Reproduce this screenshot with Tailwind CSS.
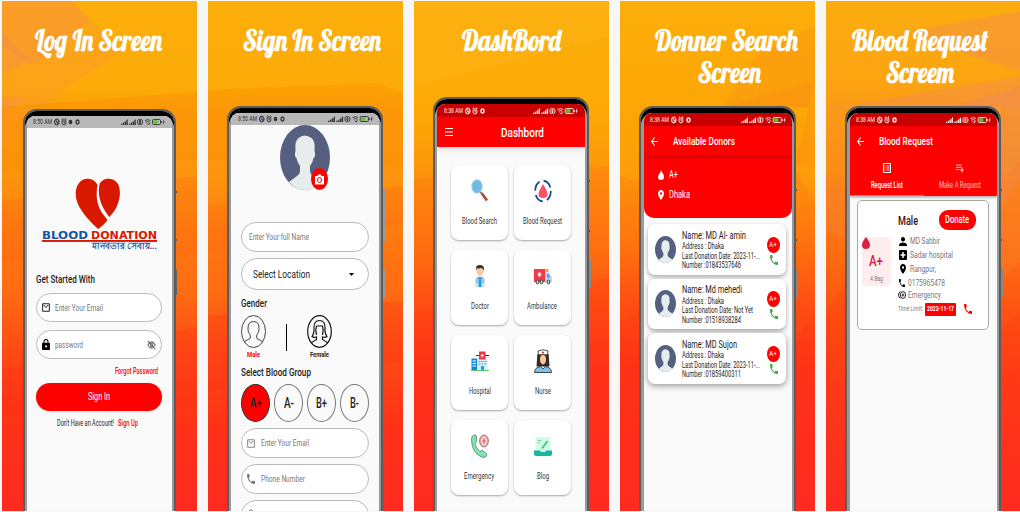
<!DOCTYPE html>
<html lang="en">
<head>
<meta charset="utf-8">
<title>Blood Donation App Screens</title>
<script src="https://cdn.jsdelivr.net/npm/@tailwindcss/browser@4"></script>
</head>
<body class="w-[1020px] h-[512px] overflow-hidden bg-[#f7f7f7] font-['Roboto','Noto_Sans',sans-serif] leading-none text-[#222]">
<svg class="hidden">
  <symbol id="sys" viewBox="0 0 26 10" preserveAspectRatio="none"><g fill="none" stroke="currentColor" stroke-width="1"><ellipse cx="2.8" cy="5" rx="2.3" ry="3"/><path d="M1 3.4l3.6 3M2.8 2v3.2L1.2 7M4.6 4.2L3 7.6" stroke-width=".7"/><ellipse cx="10" cy="5.3" rx="2" ry="2.6"/><path d="M7.6 2.6L9 1.6M12.4 2.6L11 1.6M10 3.8v1.7l1 .6"/></g></symbol>
  <symbol id="sysr" viewBox="0 0 44 10" preserveAspectRatio="none"><path fill="currentColor" d="M0 8V7l1.4-.7V8zM2 8V6l1.2-.8V8zM3.700 8V4.800L5 4v4zM5.400 8V3.400L6.800 2v6zM8 8V7l1.400-.7V8zM10 8V6l1.200-.8V8zM11.700 8V4.800L13 4v4zM13.400 8V3.400L14.800 2v6z"/><g fill="none" stroke="currentColor" stroke-width=".9"><ellipse cx="18" cy="5" rx="1.500" ry="2.600"/><ellipse cx="20" cy="5" rx="1.500" ry="2.600"/><path d="M24 3.600q2.700-2 5.400 0M25 5.200q1.700-1.200 3.300 0M26 6.500l1.500 1.500 1.600-2.500"/><rect x="31.500" y="2.500" width="8" height="5" rx="1"/></g><rect x="32.500" y="3.200" width="4" height="3.600" fill="#55c92e"/><path d="M40 4h.8v2H40zM43.200 2l-1.600 3.400h.9L42 8l1.800-3.400h-.9z" fill="currentColor"/></symbol>
  <symbol id="mail" viewBox="0 0 24 24" preserveAspectRatio="none"><path fill="none" stroke="currentColor" stroke-width="2.500" d="M2 2h20v20H2zM5 5l7 7 7-7"/></symbol>
  <symbol id="phone" viewBox="3 3 18 18" preserveAspectRatio="none"><path fill="currentColor" d="M6.620 10.790c1.440 2.830 3.760 5.140 6.590 6.590l2.200-2.200c.27-.27.67-.36 1.020-.24 1.120.37 2.330.57 3.570.57.55 0 1 .45 1 1V20c0 .55-.45 1-1 1-9.390 0-17-7.610-17-17 0-.55.450-1 1-1h3.500c.55 0 1 .45 1 1 0 1.250.2 2.450.57 3.570.11.35.03.74-.25 1.020z"/></symbol>
  <symbol id="pin" viewBox="5 2 14 20" preserveAspectRatio="none"><path fill="currentColor" fill-rule="evenodd" d="M12 2C8.130 2 5 5.130 5 9c0 5.250 7 13 7 13s7-7.750 7-13c0-3.870-3.130-7-7-7zm0 9.500a2.500 2.500 0 010-5 2.500 2.500 0 010 5z"/></symbol>
  <symbol id="back" viewBox="4 4 16 16" preserveAspectRatio="none"><path fill="currentColor" d="M20 11H7.830l5.590-5.590L12 4l-8 8 8 8 1.410-1.410L7.830 13H20z"/></symbol>
  <symbol id="avatar" viewBox="0 0 50 65" preserveAspectRatio="none"><ellipse cx="25" cy="32.500" rx="25" ry="32.500" fill="#556080"/><path fill="#e7eced" d="M9 57l8-6q3-2 3-5v-5q-3-4-3.500-8-2-1-1.500-5l.5-2q-1-10 3-13 6-5 13 0 4 3 3 13l.5 2q.5 4-1.500 5-.5 4-3.500 8v5q0 3 3 5l9 6q-7 8-16.500 8T9 57z"/></symbol>
</svg>

<main class="flex gap-[11px] pl-[2px] pt-px h-[511px]">

<!-- Log in -->
<section class="relative w-[195px] h-[510px] shrink-0 overflow-hidden flex flex-col bg-[linear-gradient(#fcae0a_0%,#fcab08_17%,#fd9d0c_22%,#fd930f_35%,#fe7a10_46%,#fe6c12_57%,#fe4c15_68%,#fe3218_83%,#ff2a20_100%)]">
  <svg class="absolute inset-0" width="195" height="510"><path fill="#f58c50" opacity=".35" d="M0 0h70l18 18L55 50 30 65 0 45z"/><path fill="#f99830" opacity=".4" d="M70 0l50 50-60 40L0 150V0z"/><path fill="#f08a60" opacity=".3" d="M0 30l30 30L0 72zM0 96h22L0 115z"/><path fill="#fd8800" opacity=".3" d="M0 106l195-15v67L0 170z"/><path fill="#ff5a10" opacity=".2" d="M0 200l195-25v80L0 260z"/><path fill="#ff2010" opacity=".18" d="M0 368l195-42v80L0 415z"/></svg>
  <header class="relative h-[108px] shrink-0 pt-[23px]"><h1 class="h-8 flex items-center pl-[33px] font-['Lobster','Liberation_Serif',serif] text-[30px] text-white [-webkit-text-stroke:0.6px_white]"><span data-w="127">Log In Screen</span></h1></header>
  <div class="relative ml-[21px] w-[153px] flex-1 rounded-t-[14px] bg-[#999] border-x-2 border-t-2 border-[#5c5c5c] shadow-[inset_0_5px_0_#000]">
    <i class="absolute -right-[3px] top-[80px] h-[50px] w-px border-y-2 border-[#555]"></i><i class="absolute -right-[3px] top-[158px] h-[26px] w-px bg-[#666]"></i>
    <div class="mx-[2px] mt-[5px] h-full rounded-t-[8px] overflow-hidden bg-[#fafafa]">
      <div class="h-3 bg-[#b8b8b8] flex items-center pl-[6px] pr-[7px] text-[#333] text-[8px]"><span data-w="19">8:50 AM</span><svg class="ml-[2px] w-[26px] h-2.5"><use href="#sys"/><ellipse cx="16.500" cy="5" rx="1.800" ry="2.300" fill="currentColor"/><ellipse cx="23.500" cy="5" rx="1.500" ry="2" fill="none" stroke="currentColor" stroke-width="1.300"/></svg><svg class="ml-auto w-11 h-2.5"><use href="#sysr"/></svg></div>
      <div class="mt-[50px] flex flex-col items-center">
        <svg class="w-[46px] h-[52px] mr-[4px]" viewBox="0 0 46 52"><path fill="#d91800" d="M22.500 7C19-1 8-1 4 5-1 11 0 22 5 30c6 10 14 17 18 21 3-2 7-5 9.500-9C23 31 20 22 22.500 7zM24.500 6.500C27-1 39-1 43 6c4 8 1 19-3 26l-5.500 7C27 30 22 19 24.500 6.500z"/></svg>
        <div class="h-[10px] w-[115px] flex items-center justify-between font-['DejaVu_Sans'] font-bold text-[10.500px]"><span data-w="46" class="text-[#1355a8]">BLOOD</span><span data-w="66" class="text-[#d91800]">DONATION</span></div>
        <div class="w-[115px] h-[2px] bg-[#d91800] border-b border-[#7b4a70]"></div>
        <div class="h-[9px] w-[115px] flex items-center justify-end text-[8.500px] font-bold text-[#1355a8]"><span data-w="65">মানবতার সেবায়...</span></div>
      </div>
      <div class="ml-[9px] w-[126px]">
        <h2 class="mt-[22px] h-3 flex items-center font-medium text-[11px]"><span data-w="59">Get Started With</span></h2>
        <div class="mt-2 h-[29px] rounded-full border border-[#bbb] bg-white flex items-center pl-[5px] text-[9.500px] text-[#777]"><svg class="w-2 h-[9px] text-black mr-[5px]"><use href="#mail"/></svg><span data-w="48">Enter Your Email</span></div>
        <div class="mt-2 h-[29px] rounded-full border border-[#bbb] bg-white flex items-center pl-[5px] pr-[5px] text-[9.500px] text-[#777]"><svg class="w-2 h-[11px] text-black mr-[5px]" viewBox="4 1 16 21" preserveAspectRatio="none"><path fill-rule="evenodd" d="M18 8h-1V6A5 5 0 007 6v2H6a2 2 0 00-2 2v10c0 1.100.9 2 2 2h12a2 2 0 002-2V10a2 2 0 00-2-2zm-6 9a2 2 0 110-4 2 2 0 010 4zM9 8V6a3 3 0 016 0v2z"/></svg><span data-w="28">password</span><svg class="ml-auto w-[9px] h-[10px]" viewBox="0 0 24 24" preserveAspectRatio="none" fill="none" stroke="#666" stroke-width="2.500"><path d="M2 12q10-15 20 0-10 15-20 0zM2 2l20 20"/><circle cx="12" cy="12" r="3.500"/></svg></div>
        <div class="mt-[7px] h-[10px] flex items-center justify-end pr-[4px] text-[8.500px] font-medium text-[#f00]"><span data-w="43">Forgot Password</span></div>
        <button class="mt-[7px] h-[28px] w-full rounded-full bg-[#f00] text-white text-[10.500px] flex items-center justify-center shadow"><span data-w="22">Sign In</span></button>
        <p class="mt-[7px] h-[10px] flex items-center pl-[21px] gap-[4px] text-[8.500px]"><span data-w="57">Don't Have an Account!</span><span data-w="20" class="font-medium text-[#f00]">Sign Up</span></p>
      </div>
    </div>
  </div>
</section>

<!-- Sign up -->
<section class="relative w-[195px] h-[510px] shrink-0 overflow-hidden flex flex-col bg-[linear-gradient(#fcae0a_0%,#fcab08_17%,#fd9d0c_22%,#fd930f_35%,#fe7a10_46%,#fe6c12_57%,#fe4c15_68%,#fe3218_83%,#ff2a20_100%)]">
  <svg class="absolute inset-0" width="195" height="510"><path fill="#fd8800" opacity=".3" d="M0 89l170-7 25 10v75L0 158z"/><path fill="#ff5a10" opacity=".2" d="M0 205l195-20v38L0 250z"/><path fill="#ff2010" opacity=".18" d="M0 315l195-15v60L0 390z"/></svg>
  <header class="relative h-[105px] shrink-0 pt-[23px]"><h1 class="h-8 flex items-center pl-[35px] font-['Lobster','Liberation_Serif',serif] text-[30px] text-white [-webkit-text-stroke:0.6px_white]"><span data-w="138">Sign In Screen</span></h1></header>
  <div class="relative ml-[19px] w-[156px] flex-1 rounded-t-[14px] bg-[#999] border-x-2 border-t-2 border-[#5c5c5c] shadow-[inset_0_5px_0_#000]">
    <i class="absolute -right-[4px] top-[81px] h-[52px] w-[2px] bg-[#999]"></i><i class="absolute -right-[4px] top-[162px] h-[28px] w-[2px] bg-[#999]"></i>
    <div class="mx-[2px] mt-[5px] h-full rounded-t-[8px] overflow-hidden bg-[#fafafa]">
      <div class="h-3 bg-[#b8b8b8] flex items-center pl-[7px] pr-[6px] text-[#333] text-[8px]"><span data-w="19">8:50 AM</span><svg class="ml-[2px] w-[26px] h-2.5"><use href="#sys"/><ellipse cx="16.500" cy="5" rx="1.800" ry="2.300" fill="currentColor"/><ellipse cx="23.500" cy="5" rx="1.500" ry="2" fill="none" stroke="currentColor" stroke-width="1.300"/></svg><svg class="ml-auto w-[45px] h-2.5"><use href="#sysr"/></svg></div>
      <div class="relative ml-[49px] w-[50px] h-[65px]"><svg class="w-[50px] h-[65px]"><use href="#avatar"/></svg>
        <div class="absolute left-[31px] top-[43px] w-[17px] h-[22px] rounded-[50%] bg-[#f00] flex items-center justify-center"><svg class="w-[9px] h-[11px]" viewBox="0 0 9 11"><path fill="#fff" d="M0 2h2.500l.8-1.500h2.400L6.500 2H9v8.500H0z"/><ellipse cx="4.500" cy="6" rx="2" ry="2.500" fill="none" stroke="#f00"/></svg></div></div>
      <div class="ml-[10px] w-[128px]">
        <div class="mt-[32px] h-[30px] rounded-full border border-[#bbb] bg-white flex items-center pl-[7px] text-[9.500px] text-[#777]"><span data-w="60">Enter Your full Name</span></div>
        <div class="mt-[6px] h-[32px] rounded-full border border-[#bbb] bg-white flex items-center pl-[11px] pr-[14px] text-[11px]"><span data-w="57">Select Location</span><svg class="ml-auto w-[5px] h-[3px]" viewBox="0 0 5 3"><path d="M0 0h5L2.500 3z"/></svg></div>
        <h2 class="mt-[7px] h-3 flex items-center font-medium text-[11px]"><span data-w="26">Gender</span></h2>
        <div class="mt-[6px] flex">
          <div class="w-[25px] flex flex-col items-center"><svg class="w-[25px] h-[33px]" viewBox="0 0 25 33" fill="none" stroke="#444"><ellipse cx="12.500" cy="16.500" rx="12" ry="16"/><path d="M3 27q3-2 6-3.500.8-1 0-4-2-2-2-5-.5-8 5.500-8t5.500 8q0 3-2 5-.8 3 0 4 3 1.500 6 3.500"/></svg><div class="h-[14px] flex items-center text-[8px] font-bold text-[#f00]"><span data-w="13">Male</span></div></div>
          <div class="ml-[20px] mt-[9px] w-px h-[27px] bg-black"></div>
          <div class="ml-[20px] w-[25px] flex flex-col items-center"><svg class="w-[25px] h-[33px]" viewBox="0 0 25 33" fill="none" stroke="#111" stroke-width="1.200"><ellipse cx="12.500" cy="16.500" rx="11.800" ry="15.800"/><path d="M4 28q3-2 5.500-3.500V22q-2.500 1-4.500-.5 2.500-3.500 2-9 0-7 5.500-7t5.500 7q-.5 5.500 2 9-2 1.500-4.500.5v2.500q2.500 1.500 5.500 3.500M9.500 20q-1.500-5 0-9h6q1.500 4 0 9"/></svg><div class="h-[14px] flex items-center text-[8px] font-bold"><span data-w="19">Female</span></div></div>
        </div>
        <h2 class="mt-[4px] h-3 flex items-center font-medium text-[11px]"><span data-w="70">Select Blood Group</span></h2>
        <div class="mt-[6px] flex gap-[4px] text-[14px] font-medium">
          <div class="w-[29px] h-[38px] rounded-[50%] border border-[#333] bg-[#f00] flex items-center justify-center"><span data-w="12">A+</span></div>
          <div class="w-[29px] h-[38px] rounded-[50%] border border-[#777] flex items-center justify-center"><span data-w="10">A-</span></div>
          <div class="w-[29px] h-[38px] rounded-[50%] border border-[#777] flex items-center justify-center"><span data-w="11">B+</span></div>
          <div class="w-[29px] h-[38px] rounded-[50%] border border-[#777] flex items-center justify-center"><span data-w="9">B-</span></div>
        </div>
        <div class="mt-[6px] h-[30px] rounded-full border border-[#bbb] bg-white flex items-center pl-[5px] text-[9.500px] text-[#777]"><svg class="w-2 h-[9px] mr-[6px]"><use href="#mail"/></svg><span data-w="48">Enter Your Email</span></div>
        <div class="mt-[6px] h-[30px] rounded-full border border-[#bbb] bg-white flex items-center pl-[5px] text-[9.500px] text-[#777]"><svg class="w-2 h-[10px] mr-[6px]"><use href="#phone"/></svg><span data-w="44">Phone Number</span></div>
        <div class="mt-[6px] h-[30px] rounded-full border border-[#bbb] bg-white pl-[6px] pt-[8px]"><svg class="w-[6px] h-[9px]" viewBox="0 0 6 9" fill="none" stroke="#777"><path d="M1 4V2q2-3 4 0v2"/></svg></div>
      </div>
    </div>
  </div>
</section>

<!-- Dashboard -->
<section class="relative w-[195px] h-[510px] shrink-0 overflow-hidden flex flex-col bg-[linear-gradient(#fcae0a_0%,#fcaa06_20%,#fda008_28%,#fd930c_34%,#fe7a10_44%,#fe6c10_50%,#fe5212_58%,#fe3218_72%,#ff2a20_100%)]">
  <svg class="absolute inset-0" width="195" height="510"><path fill="#fdb820" opacity=".3" d="M0 85L195 35V0H0z"/><path fill="#ff6a10" opacity=".22" d="M0 178l25-3 170-10v75L0 255z"/><path fill="#ff3010" opacity=".2" d="M0 312l195-35v70L0 380z"/></svg>
  <header class="relative h-[96px] shrink-0 pt-[23px]"><h1 class="h-8 flex items-center pl-[48px] font-['Lobster','Liberation_Serif',serif] text-[30px] text-white [-webkit-text-stroke:0.6px_white]"><span data-w="99">DashBord</span></h1></header>
  <div class="relative ml-[19px] w-[156px] flex-1 rounded-t-[14px] bg-[#999] border-x-2 border-t-2 border-[#5c5c5c] shadow-[inset_0_5px_0_#000]">
    <i class="absolute -right-[3px] top-[81px] h-[52px] w-px border-y-2 border-[#555]"></i><i class="absolute -right-[4px] top-[161px] h-[28px] w-[2px] bg-[#888]"></i>
    <div class="mx-[2px] mt-[5px] h-full rounded-t-[8px] overflow-hidden bg-[#fafafa]">
      <div class="h-[13px] bg-[#c80000] flex items-center pl-[7px] pr-[7px] text-white/90 text-[8px]"><span data-w="19">8:38 AM</span><svg class="ml-[2px] w-[26px] h-2.5"><use href="#sys"/><ellipse cx="17.500" cy="5" rx="1.500" ry="2" fill="none" stroke="currentColor" stroke-width="1.500"/></svg><svg class="ml-auto w-[45px] h-2.5"><use href="#sysr"/></svg></div>
      <div class="h-[30px] bg-[#f00] flex items-center pl-[8px] text-white shadow-md"><svg class="w-2 h-[8px]" viewBox="0 0 8 8"><path d="M0 .500h8M0 4h8M0 7.500h8" stroke="#fff"/></svg><span data-w="43" class="ml-[48px] text-[13px] font-medium">Dashbord</span></div>
      <div class="mt-[18px] ml-[14px] grid grid-cols-[57px_57px] gap-x-[6px] gap-y-[10px] text-[9px] text-[#333]">
        <div class="h-[75px] rounded-[8px] bg-white shadow-[0_1px_2px_#0005] flex flex-col items-center pt-[14px]"><svg class="w-[18px] h-[24px]" viewBox="0 0 18 24"><path d="M10.500 14l5.500 7.500" stroke="#a8532a" stroke-width="2.800"/><path d="M9 12.500l2.500 3" stroke="#777" stroke-width="1.500"/><ellipse cx="6" cy="7.500" rx="5" ry="6.500" fill="#6db9e8" stroke="#93c7e8" stroke-width="1.300"/></svg><div class="mt-[13px] h-[10px] flex items-center"><span data-w="35">Blood Search</span></div></div>
        <div class="h-[75px] rounded-[8px] bg-white shadow-[0_1px_2px_#0005] flex flex-col items-center pt-[14px]"><svg class="w-[18px] h-[24px]" viewBox="0 0 18 24"><ellipse cx="9" cy="12" rx="7.800" ry="10.300" fill="none" stroke="#134a8e" stroke-width="1.800" stroke-dasharray="10 4.400"/><path fill="#f4536a" d="M9 5q9 14 0 14T9 5z"/></svg><div class="mt-[13px] h-[10px] flex items-center"><span data-w="39">Blood Request</span></div></div>
        <div class="h-[75px] rounded-[8px] bg-white shadow-[0_1px_2px_#0005] flex flex-col items-center pt-[14px]"><svg class="w-[18px] h-[24px]" viewBox="0 0 18 24"><path fill="#cfe6f5" d="M4 23v-7q0-3 3-3h4q3 0 3 3v7z"/><path fill="#1d9fe0" d="M7.500 13h3v10h-3z"/><path d="M7 13q-2 3-1 6M11 13q2 3 1 6" stroke="#3a86b8" fill="none" stroke-width=".7"/><ellipse cx="9" cy="7.500" rx="3.300" ry="5" fill="#f8c9a8"/><path fill="#333" d="M5.300 7Q4 1 8 1q6-1 4.800 6Q12 4 9.500 4 7 5 6 4z"/></svg><div class="mt-[13px] h-[10px] flex items-center"><span data-w="18">Doctor</span></div></div>
        <div class="h-[75px] rounded-[8px] bg-white shadow-[0_1px_2px_#0005] flex flex-col items-center pt-[14px]"><svg class="w-[18px] h-[24px]" viewBox="0 0 18 24"><path fill="#f23a4a" d="M0 5h11.500v13H0z"/><path fill="#bcd5f5" d="M11.500 8.500H15l3 5V18h-6.500z"/><path fill="#5a8fc8" d="M13 10h1.500l1.500 3.500h-3z"/><path fill="#f7a928" d="M12 5h2.500v3H12z"/><path stroke="#fff" stroke-width="1.500" d="M3.500 10.500h4M5.500 8v5"/><g fill="#eee" stroke="#333"><ellipse cx="3.500" cy="18" rx="1.400" ry="1.900"/><ellipse cx="7.500" cy="18" rx="1.400" ry="1.900"/><ellipse cx="14.500" cy="18" rx="1.400" ry="1.900"/></g></svg><div class="mt-[13px] h-[10px] flex items-center"><span data-w="30">Ambulance</span></div></div>
        <div class="h-[75px] rounded-[8px] bg-white shadow-[0_1px_2px_#0005] flex flex-col items-center pt-[14px]"><svg class="w-[18px] h-[24px]" viewBox="0 0 18 24"><path fill="#1488d8" d="M.5 9.500H6V21H.5z"/><path fill="#dceefa" d="M6 8h10.500v13H6z"/><path stroke="#fff" d="M1.500 12h3.500M1.500 14.500h3.500M1.500 17h3.500"/><path stroke="#58a8e0" stroke-dasharray="2 1" d="M7.500 12.500h8M7.500 15h8"/><path stroke="#333" d="M5 6.500h13"/><path fill="#ef3347" d="M8 2.500h6.500v8H8z"/><path stroke="#fff" d="M9.500 6.500h3.600M11.200 4.500v4"/><path fill="#10a8f0" d="M10 17h3v4h-3z"/><path stroke="#58c878" d="M0 21.500h18"/></svg><div class="mt-[13px] h-[10px] flex items-center"><span data-w="22">Hospital</span></div></div>
        <div class="h-[75px] rounded-[8px] bg-white shadow-[0_1px_2px_#0005] flex flex-col items-center pt-[14px]"><svg class="w-[18px] h-[24px]" viewBox="0 0 18 24"><path fill="#3c2a26" stroke="#222" d="M4 5h10l1 12H3z"/><ellipse cx="9" cy="10.500" rx="3" ry="5" fill="#f9c99c"/><path fill="#fff" stroke="#222" stroke-width=".8" d="M4.500 6L4 2q5-2.500 10 0l-.5 4q-4.500-1-9 0z"/><path stroke="#f22" d="M8 3.500h2M9 2.300v2.400"/><path fill="#7dc0ee" stroke="#222" stroke-width=".8" d="M.5 23.500q0-5 6-6L9 20l2.500-2.500q6 1 6 6z"/></svg><div class="mt-[13px] h-[10px] flex items-center"><span data-w="16">Nurse</span></div></div>
        <div class="h-[75px] rounded-[8px] bg-white shadow-[0_1px_2px_#0005] flex flex-col items-center pt-[14px]"><svg class="w-[18px] h-[24px]" viewBox="0 0 18 24"><path fill="#7fe8b0" stroke="#55806c" stroke-width=".8" d="M1 2.500Q5-1 5.500 3v4Q4.500 9 4 9.500q1 5 5 8Q11 15.500 12.500 17l3 3q1 3-3.500 3.500Q1 20 .5 6z"/><ellipse cx="13" cy="7" rx="4.500" ry="6" fill="#f8a0a0" stroke="#8a6060" stroke-width=".7"/><path stroke="#fff" stroke-width="3" d="M10 7h6M13 3v8"/><path stroke="#e04a50" stroke-width="1.200" d="M10.500 7h5M13 4v6"/></svg><div class="mt-[13px] h-[10px] flex items-center"><span data-w="30">Emergency</span></div></div>
        <div class="h-[75px] rounded-[8px] bg-white shadow-[0_1px_2px_#0005] flex flex-col items-center pt-[14px]"><svg class="w-[18px] h-[24px]" viewBox="0 0 18 24"><path fill="#d4fae8" d="M1.500 3h15v15h-15z"/><path fill="#14b89c" d="M0 16.500h6l1 1.500h4l1-1.500h6V20q0 2-2 2H2q-2 0-2-2z"/><path stroke="#38cf8d" stroke-width="2" d="M8 14.500L13.500 7"/><path stroke="#70dca8" d="M3.500 6.500h4M3.500 9h2.500"/></svg><div class="mt-[13px] h-[10px] flex items-center"><span data-w="12">Blog</span></div></div>
      </div>
    </div>
  </div>
</section>

<!-- Donor search -->
<section class="relative w-[195px] h-[510px] shrink-0 overflow-hidden flex flex-col bg-[linear-gradient(#fcae0a_0%,#fca706_20%,#fd9d0a_34%,#fe860e_42%,#fe6c10_50%,#fe5212_58%,#fe3218_72%,#ff2a20_100%)]">
  <svg class="absolute inset-0" width="195" height="510"><path fill="#fb9412" opacity=".45" d="M195 25l-60 30-32 51h92z"/><path fill="#fb8412" opacity=".25" d="M195 80l-90 26h90v60l-20-3z"/><path fill="#ff6a10" opacity=".2" d="M0 175l25 8v60L0 225zM175 170l20 30v60l-20 15z"/><path fill="#ff3010" opacity=".2" d="M0 320l25-10v80L0 360zM175 340l20-30v60l-20 30z"/></svg>
  <header class="relative h-[105px] shrink-0 pt-[23px] font-['Lobster','Liberation_Serif',serif] text-[30px] text-white [-webkit-text-stroke:0.6px_white]"><h1><span class="h-8 flex items-center pl-[35px]"><span data-w="143">Donner Search</span></span><span class="h-8 flex items-center pl-[78px]"><span data-w="63">Screen</span></span></h1></header>
  <div class="relative ml-[19px] w-[157px] flex-1 rounded-t-[14px] bg-[#999] border-x-2 border-t-2 border-[#5c5c5c] shadow-[inset_0_5px_0_#000]">
    <i class="absolute -right-[3px] top-[81px] h-[52px] w-px border-y-2 border-[#555]"></i><i class="absolute -right-[4px] top-[161px] h-[28px] w-[2px] bg-[#888]"></i>
    <div class="ml-[3px] mr-[2px] mt-[5px] h-full rounded-t-[8px] overflow-hidden bg-[#fafafa]">
      <div class="h-[13px] bg-[#c80000] flex items-center pl-[6px] pr-[6px] text-white/90 text-[8px]"><span data-w="19">8:38 AM</span><svg class="ml-[2px] w-[26px] h-2.5"><use href="#sys"/><ellipse cx="17.500" cy="5" rx="1.500" ry="2" fill="none" stroke="currentColor" stroke-width="1.500"/></svg><svg class="ml-auto w-[45px] h-2.5"><use href="#sysr"/></svg></div>
      <div class="h-[92px] rounded-b-[10px] bg-[#f00] text-white">
        <div class="h-[30px] flex items-center pl-[7px] shadow-[0_1px_3px_#0004]"><svg class="w-[7px] h-[9px]"><use href="#back"/></svg><span data-w="62" class="ml-[15px] text-[11px] font-medium">Available Donors</span></div>
        <div class="mt-[13px] h-3 flex items-center pl-[14px] text-[10px]"><svg class="w-[6px] h-[10px] mr-[5px]" viewBox="0 0 6 10"><path fill="#fff" d="M3 0q1.500 2 1.300 3.500L5 3q1 2 1 4 0 3-3 3T0 7q0-2 1.500-3.500T3 0z"/><path fill="#f00" d="M3.500 8.500q1.200-.5 1-2z"/></svg><span data-w="9">A+</span></div>
        <div class="mt-[8px] h-3 flex items-center pl-[14px] text-[10px]"><svg class="w-[6px] h-[10px] mr-[5px]"><use href="#pin"/></svg><span data-w="21">Dhaka</span></div>
      </div>
      <div class="mt-[6px] ml-[4px] w-[138px] flex flex-col gap-[4px] text-[8.500px]">
        <div class="h-[50.5px] rounded-[7px] bg-white shadow-[0_2px_4px_#0005] flex items-center pl-[7px] pr-[6px]"><svg class="w-[21px] h-[27px]"><use href="#avatar"/></svg><div class="ml-[6px] mt-[2px] flex flex-col"><span class="h-[11px] flex items-center text-[10.500px]"><span data-w="64">Name: MD Al- amin</span></span><span class="h-[9.5px] flex items-center"><span data-w="42">Address : Dhaka</span></span><span class="h-[9.5px] flex items-center"><span data-w="78">Last Donation Date: 2023-11-...</span></span><span class="h-[9.5px] flex items-center"><span data-w="59">Number :01843537646</span></span></div><div class="mt-[3px] ml-auto flex flex-col items-center gap-[2px]"><div class="w-[13px] h-4 rounded-[50%] bg-[#f00] text-white text-[8px] flex items-center justify-center"><span data-w="8">A+</span></div><svg class="w-2 h-[10px] text-[#3fa648]"><use href="#phone"/></svg></div></div>
        <div class="h-[50.5px] rounded-[7px] bg-white shadow-[0_2px_4px_#0005] flex items-center pl-[7px] pr-[6px]"><svg class="w-[21px] h-[27px]"><use href="#avatar"/></svg><div class="ml-[6px] mt-[2px] flex flex-col"><span class="h-[11px] flex items-center text-[10.500px]"><span data-w="60">Name: Md mehedi</span></span><span class="h-[9.5px] flex items-center"><span data-w="42">Address : Dhaka</span></span><span class="h-[9.5px] flex items-center"><span data-w="71">Last Donation Date: Not Yet</span></span><span class="h-[9.5px] flex items-center"><span data-w="59">Number :01518938284</span></span></div><div class="mt-[3px] ml-auto flex flex-col items-center gap-[2px]"><div class="w-[13px] h-4 rounded-[50%] bg-[#f00] text-white text-[8px] flex items-center justify-center"><span data-w="8">A+</span></div><svg class="w-2 h-[10px] text-[#3fa648]"><use href="#phone"/></svg></div></div>
        <div class="h-[50.5px] rounded-[7px] bg-white shadow-[0_2px_6px_#0006] flex items-center pl-[7px] pr-[6px]"><svg class="w-[21px] h-[27px]"><use href="#avatar"/></svg><div class="ml-[6px] mt-[2px] flex flex-col"><span class="h-[11px] flex items-center text-[10.500px]"><span data-w="55">Name: MD Sujon</span></span><span class="h-[9.5px] flex items-center"><span data-w="42">Address : Dhaka</span></span><span class="h-[9.5px] flex items-center"><span data-w="78">Last Donation Date: 2023-11-...</span></span><span class="h-[9.5px] flex items-center"><span data-w="59">Number :01859400311</span></span></div><div class="mt-[3px] ml-auto flex flex-col items-center gap-[2px]"><div class="w-[13px] h-4 rounded-[50%] bg-[#f00] text-white text-[8px] flex items-center justify-center"><span data-w="8">A+</span></div><svg class="w-2 h-[10px] text-[#3fa648]"><use href="#phone"/></svg></div></div>
      </div>
    </div>
  </div>
</section>

<!-- Blood request -->
<section class="relative w-[195px] h-[510px] shrink-0 overflow-hidden flex flex-col bg-[linear-gradient(#fbac10_0%,#fba510_15%,#fb9a18_22%,#fb8c18_33%,#fe7a12_42%,#fe6c12_50%,#fe5212_62%,#fe3a18_75%,#ff2a20_100%)]">
  <svg class="absolute inset-0" width="195" height="510"><path fill="#f59048" opacity=".5" d="M195 10L85 30l60 25 50 15zM0 108L195 75v31L100 106z"/><path fill="#f08a50" opacity=".5" d="M195 85l-70 21h50v100l20-30z"/><path fill="#f98030" opacity=".4" d="M0 175l22 15v50L0 230zM172 180l23-20v100l-23 20z"/><path fill="#ff3010" opacity=".2" d="M0 310l22-30v70L0 380zM172 330l23-20v60l-23 40z"/></svg>
  <header class="relative h-[105px] shrink-0 pt-[23px] font-['Lobster','Liberation_Serif',serif] text-[30px] text-white [-webkit-text-stroke:0.6px_white]"><h1><span class="h-8 flex items-center pl-[26px]"><span data-w="136">Blood Request</span></span><span class="h-8 flex items-center pl-[60px]"><span data-w="68">Screem</span></span></h1></header>
  <div class="relative ml-[19px] w-[156px] flex-1 rounded-t-[14px] bg-[#999] border-x-2 border-t-2 border-[#5c5c5c] shadow-[inset_0_5px_0_#000]">
    <i class="absolute -right-[3px] top-[81px] h-[52px] w-px border-y-2 border-[#555]"></i><i class="absolute -right-[4px] top-[161px] h-[28px] w-[2px] bg-[#888]"></i>
    <div class="ml-[3px] mr-[2px] mt-[5px] h-full rounded-t-[8px] overflow-hidden bg-[#fafafa]">
      <div class="h-[13px] bg-[#c80000] flex items-center pl-[6px] pr-[6px] text-white/90 text-[8px]"><span data-w="19">8:38 AM</span><svg class="ml-[2px] w-[26px] h-2.5"><use href="#sys"/><ellipse cx="17.500" cy="5" rx="1.500" ry="2" fill="none" stroke="currentColor" stroke-width="1.500"/></svg><svg class="ml-auto w-[45px] h-2.5"><use href="#sysr"/></svg></div>
      <div class="h-[70px] bg-[#f00] text-white shadow-[0_1px_3px_#0006]">
        <div class="h-[30px] flex items-center pl-[7px]"><svg class="w-[7px] h-[9px]"><use href="#back"/></svg><span data-w="54" class="ml-[15px] text-[11px] font-medium">Blood Request</span></div>
        <div class="grid grid-cols-2 h-10 text-[8.500px]">
          <div class="flex flex-col items-center pt-[7px] border-b border-[#ff6060]"><svg class="w-2 h-[10px]" viewBox="0 0 8 10"><path fill="none" stroke="#fff" d="M.5.5h7v9h-7zM1.500 3h1M3.500 3h3M1.500 5h1M3.500 5h3M1.500 7h1M3.500 7h3"/></svg><div class="mt-[7px] h-[10px] flex items-center font-medium"><span data-w="32">Request List</span></div></div>
          <div class="flex flex-col items-center pt-[7px] text-white/75"><svg class="w-2 h-[10px]" viewBox="0 0 8 10"><path fill="none" stroke="currentColor" d="M0 2h5.500M0 4.300h5.500M0 6.600h3.500M6 4.500v5M4 7h4"/></svg><div class="mt-[7px] h-[10px] flex items-center"><span data-w="42">Make A Request</span></div></div>
        </div>
      </div>
      <div class="mt-[4px] ml-[7px] w-[132px] h-[130px] rounded-[5px] border border-[#aaa] bg-white flex text-[9.500px] text-[#777]">
        <div class="relative mt-[36px] ml-[4px] w-[29px] h-[49px] rounded-[4px] bg-[#ffeced] flex flex-col items-center pt-[17px]"><svg class="absolute left-0 top-0 w-2 h-3" viewBox="0 0 8 12"><path fill="#dc2240" d="M4 0q4 5 4 8 0 4-4 4T0 8q0-3 4-8z"/></svg><div class="h-[15px] flex items-center text-[15px] font-medium text-[#d81848]"><span data-w="14">A+</span></div><div class="mt-[5px] h-[9px] flex items-center text-[7.500px]"><span data-w="13">4 Bag</span></div></div>
        <div class="ml-[7px] flex-1 pr-[12px]">
          <div class="mt-[9px] h-[20px] flex items-center justify-between text-[13px] font-medium text-[#401015]"><span data-w="20">Male</span><span class="w-[37px] h-[20px] rounded-[9px] bg-[#f00] text-white text-[10.500px] flex items-center justify-center"><span data-w="24">Donate</span></span></div>
          <div class="mt-[4px] h-[14px] flex items-center"><svg class="w-[8px] h-[9px] ml-px mr-[3px]" viewBox="0 0 8 9"><ellipse cx="4" cy="2.300" rx="2" ry="2.300"/><path d="M0 9V7.500Q1 5.500 4 5.500t4 2V9z"/></svg><span data-w="30">MD Sabbir</span></div>
          <div class="h-[14px] flex items-center"><svg class="w-[8px] h-[10px] ml-px mr-[3px]" viewBox="0 0 8 10"><rect width="8" height="10" rx="1"/><path stroke="#fff" stroke-width="1.500" d="M1.500 5h5M4 2v6"/></svg><span data-w="43">Sadar hospital</span></div>
          <div class="h-[14px] flex items-center"><svg class="w-[6px] h-[10px] ml-[2px] mr-[4px] text-black"><use href="#pin"/></svg><span data-w="26">Rangpur,</span></div>
          <div class="h-[13px] flex items-center"><svg class="w-[6px] h-[8px] ml-[1px] mr-[3px] text-black"><use href="#phone"/></svg><span data-w="37">0175965478</span></div>
          <div class="h-[12px] flex items-center"><svg class="w-[8px] h-[8px] mr-[2px]" viewBox="0 0 8 8" fill="none" stroke="#111" stroke-width=".9"><path d="M2.500.7Q.5 1.500.5 4t2 3.300"/><ellipse cx="5" cy="4" rx="2.600" ry="3.400"/><path d="M3.700 4h2.600M5 2.500v3"/></svg><span data-w="33">Emergency</span></div>
          <div class="mt-px h-[14px] flex items-center text-[8px]"><span data-w="25">Time Limit:</span><span class="ml-[2px] w-[31px] h-[13px] rounded-[1px] bg-[#f00] text-white text-[8px] font-bold flex items-center justify-center"><span data-w="27">2023-11-17</span></span><svg class="ml-[8px] w-2 h-[10px] text-[#f00]"><use href="#phone"/></svg></div>
        </div>
      </div>
    </div>
  </div>
</section>
</main>
<script>
// Condense each label to its intended width while keeping its height.
function condense(el) {
  var natural = parseFloat(getComputedStyle(el).width), w = +el.dataset.w;
  if (!natural) return;
  el.style.transform = 'scaleX(' + w / natural + ')';
  el.style.marginRight = w - natural + 'px';
}
// Labels are measured again whenever their font or size changes.
var observer = new ResizeObserver(function (entries) {
  entries.forEach(function (entry) { condense(entry.target); });
});
document.querySelectorAll('[data-w]').forEach(function (el) {
  el.style.display = 'inline-block';
  el.style.whiteSpace = 'nowrap';
  el.style.flex = 'none';
  el.style.transformOrigin = 'left center';
  condense(el);
  observer.observe(el);
});
window.addEventListener('load', function () {
  document.querySelectorAll('[data-w]').forEach(condense);
});
</script>
</body>
</html>
